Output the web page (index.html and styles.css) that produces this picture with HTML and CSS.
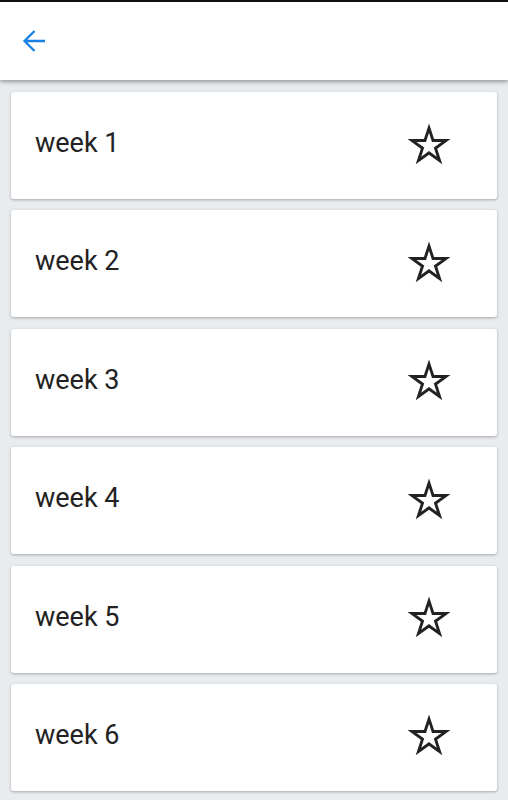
FILE: index.html
```html
<!DOCTYPE html>
<html>
<head>
<meta charset="utf-8">
<link rel="stylesheet" href="styles.css">
</head>
<body>
<div class="topline"></div>
<header class="header">
  <button class="back" aria-label="back">
    <svg width="24" height="24" viewBox="0 0 24 24"><path d="M23 12H2.5M12.5 2L2.5 12l10 10" fill="none" stroke="#1a7fe3" stroke-width="2.3"/></svg>
  </button>
</header>
<main class="list">
  <div class="card"><span class="label">week 1</span><svg class="star" width="48" height="48" viewBox="0 0 48 48"><path fill-rule="evenodd" d="M24 1.4L29.07 17.02H45.49L32.21 26.67L37.28 42.28L24 32.63L10.72 42.28L15.79 26.67L2.51 17.02H18.93Z M24 10.79L21.03 19.92H11.44L19.2 25.56L16.23 34.69L24 29.05L31.77 34.69L28.8 25.56L36.56 19.92H26.97Z"/></svg></div>
  <div class="card"><span class="label">week 2</span><svg class="star" width="48" height="48" viewBox="0 0 48 48"><path fill-rule="evenodd" d="M24 1.4L29.07 17.02H45.49L32.21 26.67L37.28 42.28L24 32.63L10.72 42.28L15.79 26.67L2.51 17.02H18.93Z M24 10.79L21.03 19.92H11.44L19.2 25.56L16.23 34.69L24 29.05L31.77 34.69L28.8 25.56L36.56 19.92H26.97Z"/></svg></div>
  <div class="card"><span class="label">week 3</span><svg class="star" width="48" height="48" viewBox="0 0 48 48"><path fill-rule="evenodd" d="M24 1.4L29.07 17.02H45.49L32.21 26.67L37.28 42.28L24 32.63L10.72 42.28L15.79 26.67L2.51 17.02H18.93Z M24 10.79L21.03 19.92H11.44L19.2 25.56L16.23 34.69L24 29.05L31.77 34.69L28.8 25.56L36.56 19.92H26.97Z"/></svg></div>
  <div class="card"><span class="label">week 4</span><svg class="star" width="48" height="48" viewBox="0 0 48 48"><path fill-rule="evenodd" d="M24 1.4L29.07 17.02H45.49L32.21 26.67L37.28 42.28L24 32.63L10.72 42.28L15.79 26.67L2.51 17.02H18.93Z M24 10.79L21.03 19.92H11.44L19.2 25.56L16.23 34.69L24 29.05L31.77 34.69L28.8 25.56L36.56 19.92H26.97Z"/></svg></div>
  <div class="card"><span class="label">week 5</span><svg class="star" width="48" height="48" viewBox="0 0 48 48"><path fill-rule="evenodd" d="M24 1.4L29.07 17.02H45.49L32.21 26.67L37.28 42.28L24 32.63L10.72 42.28L15.79 26.67L2.51 17.02H18.93Z M24 10.79L21.03 19.92H11.44L19.2 25.56L16.23 34.69L24 29.05L31.77 34.69L28.8 25.56L36.56 19.92H26.97Z"/></svg></div>
  <div class="card"><span class="label">week 6</span><svg class="star" width="48" height="48" viewBox="0 0 48 48"><path fill-rule="evenodd" d="M24 1.4L29.07 17.02H45.49L32.21 26.67L37.28 42.28L24 32.63L10.72 42.28L15.79 26.67L2.51 17.02H18.93Z M24 10.79L21.03 19.92H11.44L19.2 25.56L16.23 34.69L24 29.05L31.77 34.69L28.8 25.56L36.56 19.92H26.97Z"/></svg></div>
</main>
</body>
</html>
```
FILE: styles.css
```css
* { box-sizing: border-box; }
html, body {
  margin: 0;
  padding: 0;
  background: #e9ecef;
  font-family: Roboto, "Noto Sans", sans-serif;
  overflow: hidden;
}
.topline {
  height: 2px;
  background: #111;
}
.header {
  height: 78px;
  background: #fff;
  display: flex;
  align-items: center;
  padding-left: 22px;
  box-shadow: 0 2px 4px rgba(0,0,0,0.35);
  position: relative;
  z-index: 2;
}
.back {
  border: 0;
  padding: 0;
  background: none;
  display: flex;
  width: 24px;
  height: 24px;
}
.list {
  display: flex;
  flex-direction: column;
  gap: 11.4px;
  padding: 12px 11px;
}
.card {
  height: 107px;
  background: #fff;
  border-radius: 3px;
  box-shadow: 0 1px 3px rgba(0,0,0,0.3);
  display: flex;
  align-items: center;
  justify-content: space-between;
  padding: 0 44px 0 24px;
  flex-shrink: 0;
}
.label {
  font-size: 27px;
  color: #222;
  padding-bottom: 5px;
}
.star {
  fill: #222;
}
```
